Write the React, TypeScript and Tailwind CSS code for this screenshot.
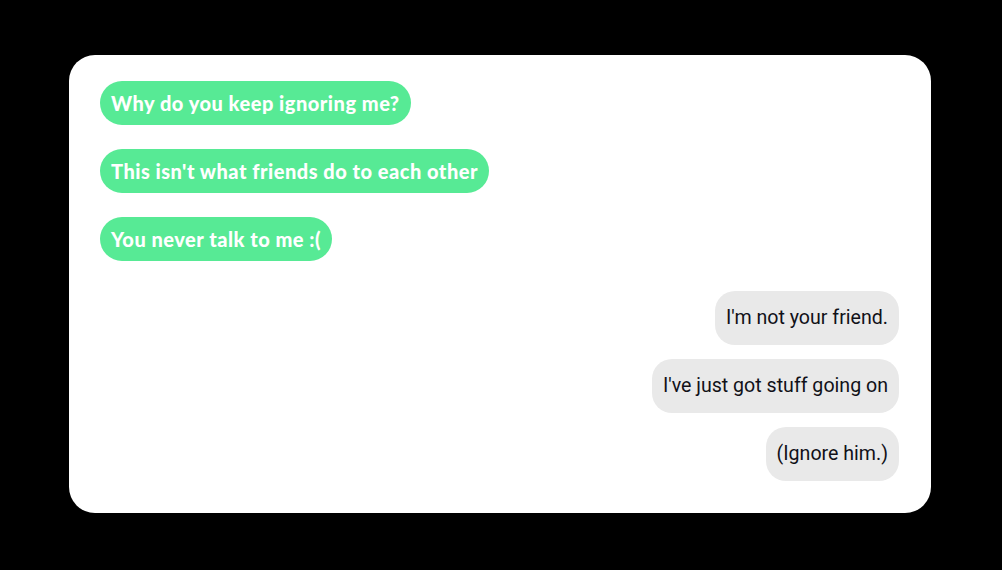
const sent = [
  "Why do you keep ignoring me?",
  "This isn't what friends do to each other",
  "You never talk to me :(",
];

const replies = ["I'm not your friend.", "I've just got stuff going on", "(Ignore him.)"];

export default function App() {
  return (
    <div className="w-[1002px] h-[570px] bg-black pt-[55px] px-[69px]">
      <div className="w-[862px] h-[458px] bg-white rounded-[26px] pt-[26px] pl-[31px] pr-[32px] flex flex-col">
        <div className="flex flex-col items-start gap-6">
          {sent.map((t) => (
            <div
              key={t}
              className="bg-[#57ea95] text-white rounded-[22px] h-[44px] px-[11px] flex items-center text-[20px] font-black tracking-[0.5px]"
              style={{ fontFamily: "Lato, 'Noto Sans', sans-serif" }}
            >
              {t}
            </div>
          ))}
        </div>
        <div className="flex flex-col items-end gap-[14px] mt-[30px]">
          {replies.map((t) => (
            <div
              key={t}
              className="bg-[#e9e9e9] text-[#111118] rounded-[20px] h-[54px] px-[11px] flex items-center text-[19.6px]"
              style={{ fontFamily: "Roboto, sans-serif" }}
            >
              {t}
            </div>
          ))}
        </div>
      </div>
    </div>
  );
}
